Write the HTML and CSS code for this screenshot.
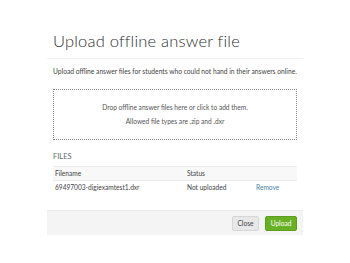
FILE: index.html
```html
<!DOCTYPE html>
<html>
<head>
<meta charset="utf-8">
<link rel="stylesheet" href="styles.css">
</head>
<body>
<div class="modal">
  <div class="header"><h1>Upload offline answer file</h1></div>
  <div class="body">
    <p class="desc">Upload offline answer files for students who could not hand in their answers online.</p>
    <div class="drop">
      <div>Drop offline answer files here or click to add them.</div>
      <div>Allowed file types are .zip and .dxr</div>
    </div>
    <div class="files-label">FILES</div>
    <table class="files">
      <thead><tr><th class="c1">Filename</th><th class="c2">Status</th><th></th></tr></thead>
      <tbody><tr><td>69497003-digiexamtest1.dxr</td><td>Not uploaded</td><td><span class="remove">Remove</span></td></tr></tbody>
    </table>
  </div>
  <div class="footer">
    <button class="btn close">Close</button>
    <button class="btn upload">Upload</button>
  </div>
</div>
</body>
</html>
```
FILE: styles.css
```css
html, body { margin: 0; padding: 0; background: #fff; }
body { font-family: Lato, "Noto Sans", sans-serif; color: #333; }
.modal { width: 256px; margin: 27px 0 0 47px; background: #fff; }
.header { padding: 0 6px; border-bottom: 1px solid #f0f0f0; height: 31px; }
.header h1 { margin: 0; font-weight: 300; font-size: 16.5px; line-height: 28px; color: #2e2e2e; letter-spacing: 0.2px; }
.body { padding: 7px 6px 17px; }
.desc { margin: 0; font-size: 6.7px; line-height: 10px; color: #444; white-space: nowrap; }
.drop { margin-top: 13px; height: 49px; border: 1px dotted #888; display: flex; flex-direction: column; align-items: center; justify-content: center; gap: 5px; font-size: 6.6px; line-height: 9px; color: #555; }
.files-label { margin-top: 12px; font-size: 7.5px; line-height: 10px; color: #666; }
.files { width: 100%; border-collapse: collapse; margin-top: 4px; font-size: 6.6px; color: #444; }
.files th { text-align: left; font-weight: 400; background: #f8f8f8; border-top: 1px solid #ececec; border-bottom: 1px solid #ececec; padding: 3px 2px; line-height: 7px; }
.files td { padding: 2px 2px; line-height: 8px; }
.files .c1 { width: 128px; }
.files .c2 { width: 65px; }
.remove { color: #4a7fa8; }
.footer { background: #f4f4f4; border-top: 1px solid #ececec; height: 24px; display: flex; justify-content: flex-end; align-items: center; gap: 6px; padding: 0 6px; }
.btn { font-family: inherit; font-size: 6.6px; height: 15px; padding: 0 3px; border-radius: 2px; cursor: pointer; }
.close { background: #e8e8e8; border: 1px solid #d6d6d6; color: #444; width: 27px; }
.upload { background: #6ab024; border: 1px solid #5e9e1e; color: #fff; width: 32px; }
```
